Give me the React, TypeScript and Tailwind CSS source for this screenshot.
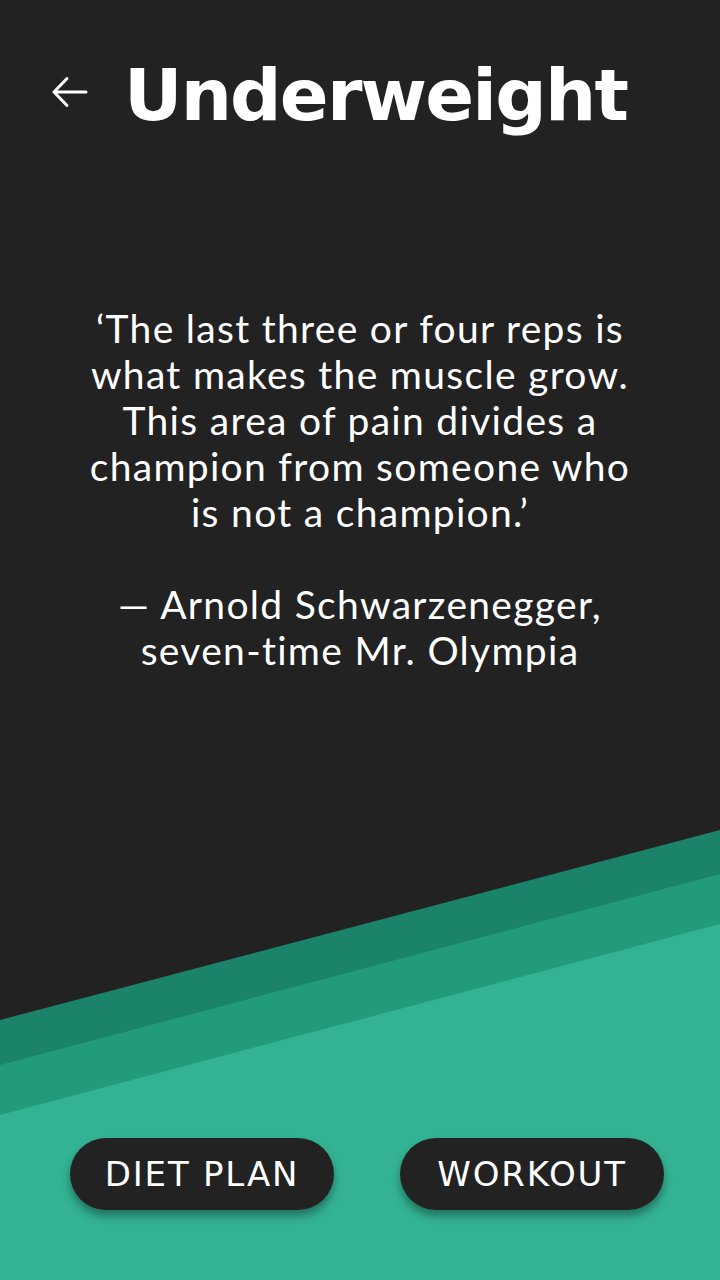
import React from "react";

const quoteLines = [
  "\u2018The last three or four reps is",
  "what makes the muscle grow.",
  "This area of pain divides a",
  "champion from someone who",
  "is not a champion.\u2019",
];

const creditLines = ["\u2014 Arnold Schwarzenegger,", "seven-time Mr. Olympia"];

function BackArrow() {
  return (
    <svg width="40" height="36" viewBox="0 0 40 36" fill="none" aria-hidden>
      <path
        d="M3 18H35M16 4.5L3 18L16 31.5"
        stroke="white"
        strokeWidth="3"
        strokeLinecap="round"
        strokeLinejoin="round"
      />
    </svg>
  );
}

function Bands() {
  return (
    <svg
      className="absolute inset-0 h-full w-full"
      viewBox="0 0 720 1280"
      preserveAspectRatio="none"
      aria-hidden
    >
      <polygon points="0,1020 720,830 720,1280 0,1280" fill="#1a836a" />
      <polygon points="0,1065 720,874 720,1280 0,1280" fill="#229a7c" />
      <polygon points="0,1115 720,924 720,1280 0,1280" fill="#33b294" />
    </svg>
  );
}

function PillButton({ label }: { label: string }) {
  return (
    <button className="flex h-[72px] w-[264px] items-center justify-center rounded-full bg-[#222222] text-[34px] tracking-[1.8px] text-white shadow-[0_6px_8px_rgba(0,0,0,0.35)] font-['DejaVu_Sans',sans-serif]">
      {label}
    </button>
  );
}

export default function App() {
  return (
    <div className="relative h-[1280px] w-[720px] overflow-hidden bg-[#222222]">
      <Bands />

      <div className="relative flex h-full flex-col">
        {/* Header */}
        <div className="flex items-center pl-[51px] pt-[59px]">
          <div className="mb-[6px]">
            <BackArrow />
          </div>
          <h1 className="ml-[33px] text-[72px] leading-[72px] font-bold tracking-[-1.8px] text-white font-['DejaVu_Sans',sans-serif]">
            Underweight
          </h1>
        </div>

        {/* Quote */}
        <div className="mt-[174px] text-center text-[39px] leading-[46px] tracking-[1.3px] text-white [font-variant-ligatures:none] font-['Lato',sans-serif]">
          {quoteLines.map((line) => (
            <p key={line}>{line}</p>
          ))}
          <p className="h-[46px]" />
          {creditLines.map((line) => (
            <p key={line}>{line}</p>
          ))}
        </div>

        <div className="flex-1" />

        {/* Actions */}
        <div className="flex justify-between pl-[70px] pr-[56px] pb-[70px]">
          <PillButton label="DIET PLAN" />
          <PillButton label="WORKOUT" />
        </div>
      </div>
    </div>
  );
}
